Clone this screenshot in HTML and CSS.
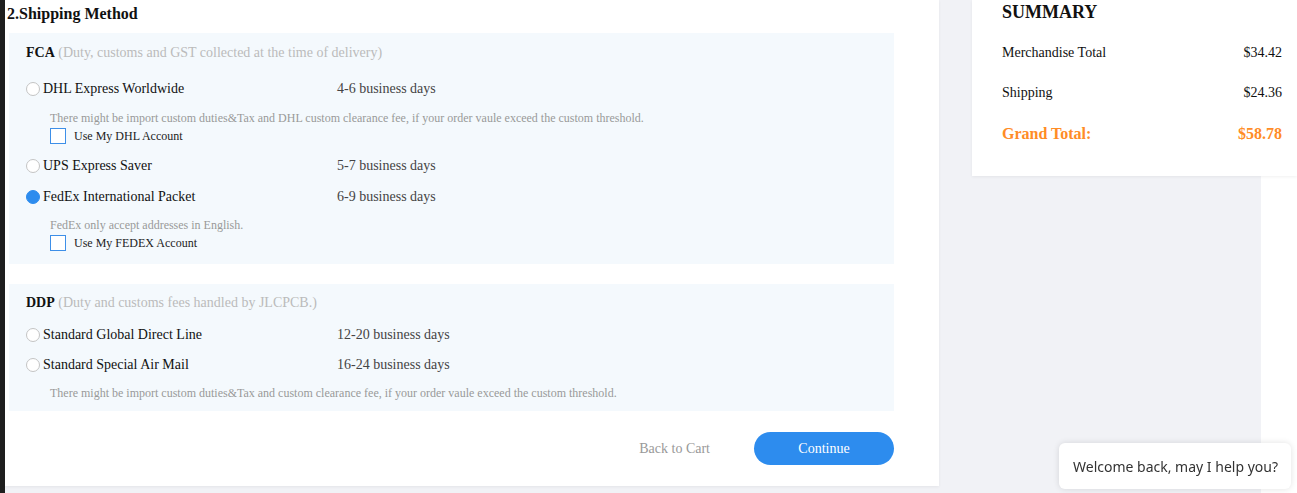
FILE: index.html
```html
<!DOCTYPE html>
<html>
<head>
<meta charset="utf-8">
<link rel="stylesheet" href="styles.css">
</head>
<body>
<div class="page">
  <div class="edge"></div>
  <div class="stage">
    <main class="panel">
      <h2 class="title">2.Shipping Method</h2>

      <section class="group group-fca">
        <div class="group-head"><b>FCA</b> <span class="sub">(Duty, customs and GST collected at the time of delivery)</span></div>

        <div class="option opt-dhl">
          <span class="name"><span class="radio"></span>DHL Express Worldwide</span>
          <span class="days">4-6 business days</span>
        </div>
        <div class="note note-dhl">There might be import custom duties&amp;Tax and DHL custom clearance fee, if your order vaule exceed the custom threshold.</div>
        <label class="check"><span class="box"></span>Use My DHL Account</label>

        <div class="option opt-ups">
          <span class="name"><span class="radio"></span>UPS Express Saver</span>
          <span class="days">5-7 business days</span>
        </div>

        <div class="option opt-fedex">
          <span class="name"><span class="radio checked"></span>FedEx International Packet</span>
          <span class="days">6-9 business days</span>
        </div>
        <div class="note note-fedex">FedEx only accept addresses in English.</div>
        <label class="check"><span class="box"></span>Use My FEDEX Account</label>
      </section>

      <section class="group group-ddp">
        <div class="group-head"><b>DDP</b> <span class="sub">(Duty and customs fees handled by JLCPCB.)</span></div>

        <div class="option opt-sgdl">
          <span class="name"><span class="radio"></span>Standard Global Direct Line</span>
          <span class="days">12-20 business days</span>
        </div>
        <div class="option opt-ssam">
          <span class="name"><span class="radio"></span>Standard Special Air Mail</span>
          <span class="days">16-24 business days</span>
        </div>
        <div class="note note-ddp">There might be import custom duties&amp;Tax and custom clearance fee, if your order vaule exceed the custom threshold.</div>
      </section>

      <div class="actions">
        <a class="back">Back to Cart</a>
        <button class="continue">Continue</button>
      </div>
    </main>

    <aside class="summary">
      <h3 class="sum-title">SUMMARY</h3>
      <div class="sum-row r1"><span>Merchandise Total</span><span>$34.42</span></div>
      <div class="sum-row r2"><span>Shipping</span><span>$24.36</span></div>
      <div class="sum-row grand"><span>Grand Total:</span><span>$58.78</span></div>
    </aside>
  </div>
</div>

<div class="chat">Welcome back, may I help you?</div>
</body>
</html>
```

FILE: styles.css
```css
* { box-sizing: border-box; }
html, body { margin: 0; padding: 0; }
body {
  background: #ffffff;
  font-family: "Liberation Serif", "Times New Roman", serif;
  color: #222;
  overflow: hidden;
  height: 493px;
}
.page {
  display: flex;
  height: 493px;
}
.edge {
  width: 5px;
  flex-shrink: 0;
  background: #1e1e1e;
}
.stage {
  width: 1256px;
  flex-shrink: 0;
  background: #f1f2f6;
  display: flex;
  align-items: flex-start;
  gap: 33px;
}
.panel {
  width: 934px;
  flex-shrink: 0;
  height: 486px;
  background: #fff;
  padding: 0 45px 0 4px;
  box-shadow: 0 1px 3px rgba(0,0,0,0.06);
}
.title {
  margin: 0 0 0 -2px;
  height: 33px;
  padding: 4px 0 0 0;
  font-size: 16px;
  line-height: 20px;
  font-weight: bold;
  color: #111;
}
.group {
  background: #f4f9fd;
  width: 885px;
  padding-left: 17px;
}
.group-fca { padding-top: 10px; padding-bottom: 13px; }
.group-ddp { margin-top: 20px; padding-top: 9px; padding-bottom: 9px; }
.group-head {
  font-size: 14px;
  line-height: 20px;
  color: #111;
}
.group-head b { font-weight: bold; }
.sub { color: #bbbbbb; }

.option {
  display: grid;
  grid-template-columns: 311px auto;
  align-items: center;
  height: 20px;
  font-size: 14px;
  line-height: 20px;
}
.name {
  display: flex;
  align-items: center;
  color: #111;
}
.days { color: #444; }
.radio {
  width: 14px;
  height: 14px;
  border: 1px solid #c4c4c4;
  border-radius: 50%;
  background: #fff;
  margin-right: 3px;
  flex-shrink: 0;
}
.radio.checked {
  background: #2d8cee;
  border-color: #2d8cee;
}
.opt-dhl { margin-top: 16px; }
.opt-ups { margin-top: 12px; }
.opt-fedex { margin-top: 11px; }
.opt-sgdl { margin-top: 12px; }
.opt-ssam { margin-top: 10px; }

.note {
  font-size: 12px;
  line-height: 18px;
  color: #999;
  padding-left: 24px;
}
.note-dhl { margin-top: 10px; }
.note-fedex { margin-top: 9px; }
.note-ddp { margin-top: 9px; }

.check {
  display: flex;
  align-items: center;
  height: 16px;
  margin-top: 1px;
  padding-left: 24px;
  font-size: 12px;
  color: #222;
}
.box {
  width: 16px;
  height: 16px;
  border: 1px solid #3d8fe8;
  background: #fff;
  margin-right: 8px;
  flex-shrink: 0;
}

.actions {
  width: 885px;
  margin-top: 21px;
  display: flex;
  justify-content: flex-end;
  align-items: center;
  gap: 44px;
}
.back {
  font-size: 14px;
  color: #999;
  text-decoration: none;
}
.continue {
  width: 140px;
  height: 33px;
  border: none;
  border-radius: 17px;
  background: #2d8cee;
  color: #fff;
  font-family: "Liberation Serif", "Times New Roman", serif;
  font-size: 14px;
  padding: 0;
}

.summary {
  width: 325px;
  flex-shrink: 0;
  background: #fff;
  padding: 0 15px 32px 30px;
  box-shadow: 0 1px 3px rgba(0,0,0,0.06);
}
.sum-title {
  margin: 0;
  font-size: 18px;
  line-height: 24px;
  font-weight: bold;
  color: #111;
}
.sum-row {
  display: flex;
  justify-content: space-between;
  font-size: 14px;
  line-height: 20px;
  color: #111;
}
.r1 { margin-top: 19px; }
.r2 { margin-top: 20px; }
.grand {
  margin-top: 21px;
  font-size: 16px;
  font-weight: bold;
  color: #ff8c26;
}

.chat {
  position: fixed;
  right: 6px;
  bottom: 4px;
  width: 232px;
  height: 46px;
  background: #fff;
  border-radius: 6px;
  box-shadow: 0 0 6px rgba(0,0,0,0.12);
  font-family: "Noto Sans", "Open Sans", sans-serif;
  font-size: 14px;
  color: #333;
  display: flex;
  align-items: center;
  padding-left: 14px;
}
```
